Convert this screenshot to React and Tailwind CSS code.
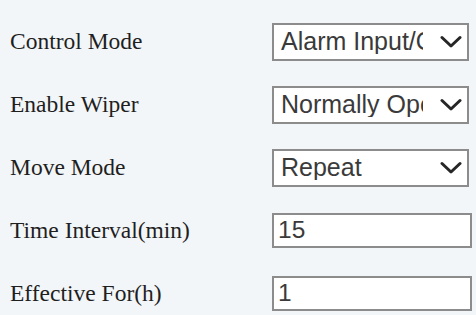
const rows = [
  { label: 'Control Mode', kind: 'select', value: 'Alarm Input/Output' },
  { label: 'Enable Wiper', kind: 'select', value: 'Normally Open' },
  { label: 'Move Mode', kind: 'select', value: 'Repeat' },
  { label: 'Time Interval(min)', kind: 'input', value: '15' },
  { label: 'Effective For(h)', kind: 'input', value: '1' },
]

function Chevron() {
  return (
    <svg width="22" height="14" viewBox="0 0 22 14" fill="none">
      <path d="M2 2.5 L11 11 L20 2.5" stroke="#262626" strokeWidth="3" strokeLinecap="round" strokeLinejoin="round" />
    </svg>
  )
}

export default function App() {
  return (
    <div className="w-[476px] h-[315px] overflow-hidden bg-[#f3f6f9] pt-[10px]">
      {rows.map((row) => (
        <div key={row.label} className="h-[63px] flex items-center">
          <div
            className="w-[272px] pl-[10px] text-[23.5px] leading-none text-[#1f1f1f]"
            style={{ fontFamily: '"Liberation Serif", "Times New Roman", serif' }}
          >
            {row.label}
          </div>
          {row.kind === 'select' ? (
            <div
              className="w-[197px] h-[38px] bg-white border-2 border-[#8c8c8c] flex items-center pl-[7px] pr-[5px]"
              style={{ fontFamily: '"Liberation Sans", Arial, sans-serif' }}
            >
              <span className="w-[142px] overflow-hidden whitespace-nowrap text-[25px] leading-none text-[#3a3a3a]">
                {row.value}
              </span>
              <span className="ml-auto flex items-center">
                <Chevron />
              </span>
            </div>
          ) : (
            <div
              className="w-[200px] h-[35px] bg-white border-2 border-[#8c8c8c] flex items-center pl-[4px]"
              style={{ fontFamily: '"Liberation Sans", Arial, sans-serif' }}
            >
              <span className="text-[24.5px] leading-none text-[#3a3a3a]">{row.value}</span>
            </div>
          )}
        </div>
      ))}
    </div>
  )
}
